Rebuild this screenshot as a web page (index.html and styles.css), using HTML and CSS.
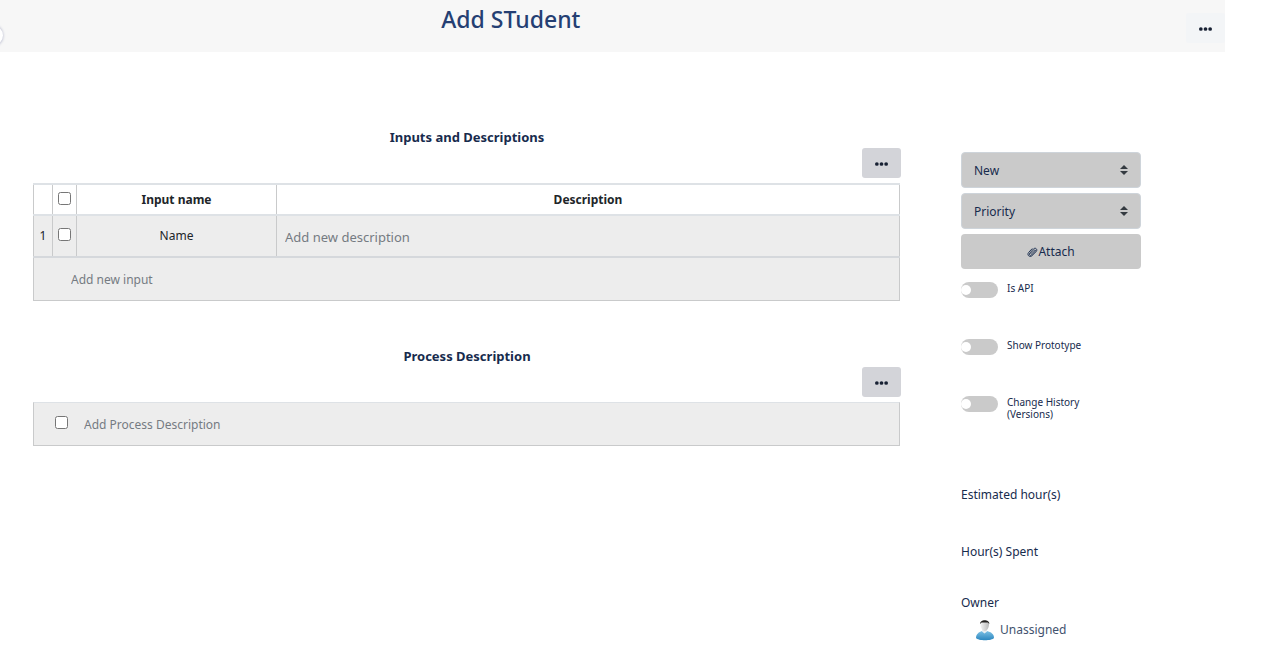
FILE: index.html
```html
<!DOCTYPE html>
<html lang="en">
<head>
<meta charset="utf-8">
<meta name="viewport" content="width=device-width, initial-scale=1">
<title>Add STudent</title>
<link rel="stylesheet" href="styles.css">
</head>
<body>
<header class="topbar">
  <button class="drawer-handle" type="button" aria-label="Open sidebar"></button>
  <h1 class="title">Add STudent</h1>
  <button class="more more-light" type="button" aria-label="Page options"><svg class="dots" viewBox="0 0 14 4"><circle cx="2" cy="2" r="2"/><circle cx="7" cy="2" r="2"/><circle cx="12" cy="2" r="2"/></svg></button>
</header>
<main class="layout">
  <div class="content">
    <section class="block">
      <h2 class="heading">Inputs and Descriptions</h2>
      <button class="more" type="button" aria-label="Input options"><svg class="dots" viewBox="0 0 14 4"><circle cx="2" cy="2" r="2"/><circle cx="7" cy="2" r="2"/><circle cx="12" cy="2" r="2"/></svg></button>
      <table class="inputs">
        <colgroup><col class="col-number"><col class="col-check"><col class="col-name"><col></colgroup>
        <thead>
          <tr><th></th><th><input class="check" type="checkbox" aria-label="Select all inputs"></th><th>Input name</th><th>Description</th></tr>
        </thead>
        <tbody>
          <tr class="row"><td>1</td><td><input class="check" type="checkbox" aria-label="Select Name"></td><td>Name</td><td><input class="field description" type="text" placeholder="Add new description" aria-label="Description"></td></tr>
          <tr class="row new-row"><td colspan="4"><input class="field new-input" type="text" placeholder="Add new input" aria-label="New input"></td></tr>
        </tbody>
      </table>
    </section>
    <section class="block">
      <h2 class="heading">Process Description</h2>
      <button class="more" type="button" aria-label="Process options"><svg class="dots" viewBox="0 0 14 4"><circle cx="2" cy="2" r="2"/><circle cx="7" cy="2" r="2"/><circle cx="12" cy="2" r="2"/></svg></button>
      <div class="process">
        <input class="check" type="checkbox" aria-label="Select process">
        <input class="field" type="text" placeholder="Add Process Description" aria-label="Process description">
      </div>
    </section>
  </div>
  <aside class="sidebar">
    <div class="controls">
      <div class="picker">
        <select class="select" aria-label="Status"><option>New</option></select>
        <svg class="arrows" viewBox="0 0 8 10"><path d="M4 0 8 4H0ZM0 6h8L4 10Z"/></svg>
      </div>
      <div class="picker">
        <select class="select" aria-label="Priority"><option>Priority</option></select>
        <svg class="arrows" viewBox="0 0 8 10"><path d="M4 0 8 4H0ZM0 6h8L4 10Z"/></svg>
      </div>
      <button class="attach" type="button"><svg class="clip" viewBox="0 0 24 24"><path d="M8 16 16 8c1.500-1.500 3.500.5 2 2L10 18.500c-3 3-7-1-4-4L14 5.500c4.500-4.500 10 1 6 5.500L11 20c-5 5-12-1.500-7.500-7L11 5"/></svg>Attach</button>
    </div>
    <div class="toggles">
      <label class="toggle"><input class="switch" type="checkbox"><span>Is API</span></label>
      <label class="toggle"><input class="switch" type="checkbox"><span>Show Prototype</span></label>
      <label class="toggle"><input class="switch" type="checkbox"><span>Change History (Versions)</span></label>
    </div>
    <div class="facts">
      <p class="fact">Estimated hour(s)</p>
      <p class="fact">Hour(s) Spent</p>
    </div>
    <p class="fact">Owner</p>
    <div class="owner">
      <svg class="avatar" viewBox="0 0 20 22">
        <defs>
          <linearGradient id="shirt" x1="0" y1="0" x2="0" y2="1"><stop offset="0" stop-color="#7cc0e4"/><stop offset="1" stop-color="#2b86bf"/></linearGradient>
          <linearGradient id="face" x1="0" y1="0" x2="1" y2="0"><stop offset="0" stop-color="#f4f4f4"/><stop offset="1" stop-color="#b9b9b9"/></linearGradient>
        </defs>
        <path d="M1 19c0-4 3-6 6-7h5c4 1 7 3 7 7-2 3-16 3-18 0Z" fill="url(#shirt)"/>
        <path d="M7 10h5v2.500l-2.500 2L7 12.500Z" fill="#e8eef2"/>
        <path d="M5.500 4c0-3 8.500-3 8.500 0 .3 4-1.500 8-4.200 8S5.200 8 5.500 4Z" fill="url(#face)"/>
        <path d="M5.200 5C4.700 0 14.700 0 14.300 5L13 3.500H6.500Z" fill="#24211f"/>
      </svg>
      <span>Unassigned</span>
    </div>
  </aside>
</main>
</body>
</html>
```
FILE: styles.css
```css
* { box-sizing: border-box; }

body {
  margin: 0;
  background: #fff;
  color: #212529;
  font-family: "Noto Sans", "Open Sans", sans-serif;
  font-size: 12px;
  line-height: 20px;
}

button, input, select { font: inherit; color: inherit; }

h1, h2, p { margin: 0; }

.topbar {
  position: relative;
  display: flex;
  justify-content: space-between;
  align-items: flex-start;
  height: 52px;
  margin-right: 44px;
  background: #f7f7f7;
  overflow: hidden;
}

.drawer-handle {
  position: absolute;
  top: 25px;
  left: -18px;
  width: 21px;
  height: 21px;
  padding: 0;
  border: 0;
  border-radius: 50%;
  background: #fff;
  box-shadow: 0 0 3px #a9acc4;
}

.title {
  width: 83.4%;
  padding-top: 4px;
  color: #253f73;
  font-size: 23px;
  font-weight: 500;
  line-height: 30px;
  text-align: center;
}

.more {
  display: flex;
  align-items: center;
  justify-content: center;
  width: 39px;
  height: 30px;
  margin-left: auto;
  padding: 2px 0 0;
  border: 0;
  border-radius: 3px;
  background: #d3d4d9;
  color: #172033;
}

.more-light {
  margin-top: 13px;
  background: #f3f5f7;
}

.dots { width: 13px; height: 4px; fill: currentColor; }

.layout {
  display: flex;
  gap: 60px;
  margin-right: 128px;
  padding-left: 33px;
}

.content { flex: 1; padding-top: 75px; }

.block + .block { margin-top: 45px; }

.heading {
  margin-bottom: 1px;
  color: #172b4d;
  font-size: 13px;
  font-weight: 700;
  line-height: 20px;
  text-align: center;
}

.inputs {
  width: calc(100% - 1px);
  margin-top: 5px;
  border-collapse: collapse;
  table-layout: fixed;
}

.col-number { width: 19px; }
.col-check { width: 24px; }
.col-name { width: 200px; }

.inputs th, .inputs td {
  height: 42px;
  padding: 0;
  border: 1px solid #c9cacb;
  text-align: center;
}

.inputs th {
  height: 31px;
  border-top: 2px solid #dee2e6;
  border-bottom: 2px solid #dee2e6;
}

.inputs .new-row td { height: 43px; border-top: 2px solid #d5d8dc; }

.row { background: #ededed; }

.check {
  display: block;
  width: 13px;
  height: 13px;
  margin: 0 auto 3px;
}

.field {
  display: block;
  width: 100%;
  height: 30px;
  padding: 2px 0 0;
  border: 0;
  background: transparent;
  outline: 0;
}

.field::placeholder { color: #757b82; opacity: 1; }

.description { padding-left: 8px; font-size: 13px; }
.new-input { padding-left: 37px; }

.process {
  display: flex;
  align-items: center;
  gap: 16px;
  height: 44px;
  margin: 5px 1px 0 0;
  padding: 0 21px;
  border: 1px solid #c9cacb;
  border-top-color: #dee2e6;
  background: #ededed;
}

.process .check { flex: none; margin: 0 0 3px; }

.sidebar {
  flex: none;
  width: 180px;
  padding-top: 100px;
  color: #172b4d;
}

.controls { display: grid; gap: 5px; }

.picker { display: grid; align-items: center; }

.picker > * { grid-area: 1 / 1; }

.select {
  width: 100%;
  height: 36px;
  padding: 2px 12px 0;
  border: 1px solid #ced4da;
  border-radius: 4px;
  background: #cacaca;
  appearance: none;
}

.arrows {
  justify-self: end;
  width: 8px;
  height: 10px;
  margin-right: 13px;
  fill: #343a40;
  pointer-events: none;
}

.attach {
  display: flex;
  align-items: center;
  justify-content: center;
  height: 35px;
  padding: 0;
  border: 0;
  border-radius: 4px;
  background: #cacaca;
}

.clip {
  width: 11px;
  height: 12px;
  fill: none;
  stroke: currentColor;
  stroke-width: 2;
  stroke-linecap: round;
}

.toggles { margin-top: 13px; }

.toggle {
  display: flex;
  align-items: flex-start;
  gap: 9px;
  width: 130px;
  height: 57px;
  font-size: 10px;
  line-height: 12px;
}

.switch {
  flex: none;
  width: 37px;
  height: 16px;
  margin: 0;
  border-radius: 8px;
  background: #cacaca;
  appearance: none;
}

.switch::before {
  content: "";
  display: block;
  width: 10px;
  height: 10px;
  margin-top: 3px;
  border-radius: 50%;
  background: #fff;
}

.switch:checked::before { margin-left: 27px; }

.facts {
  display: grid;
  gap: 37px;
  margin: 32px 0 31px;
}

.owner {
  display: flex;
  align-items: center;
  gap: 5px;
  margin-top: 6px;
  padding-left: 14px;
  color: #42526e;
}

.avatar { width: 20px; height: 22px; }
```
